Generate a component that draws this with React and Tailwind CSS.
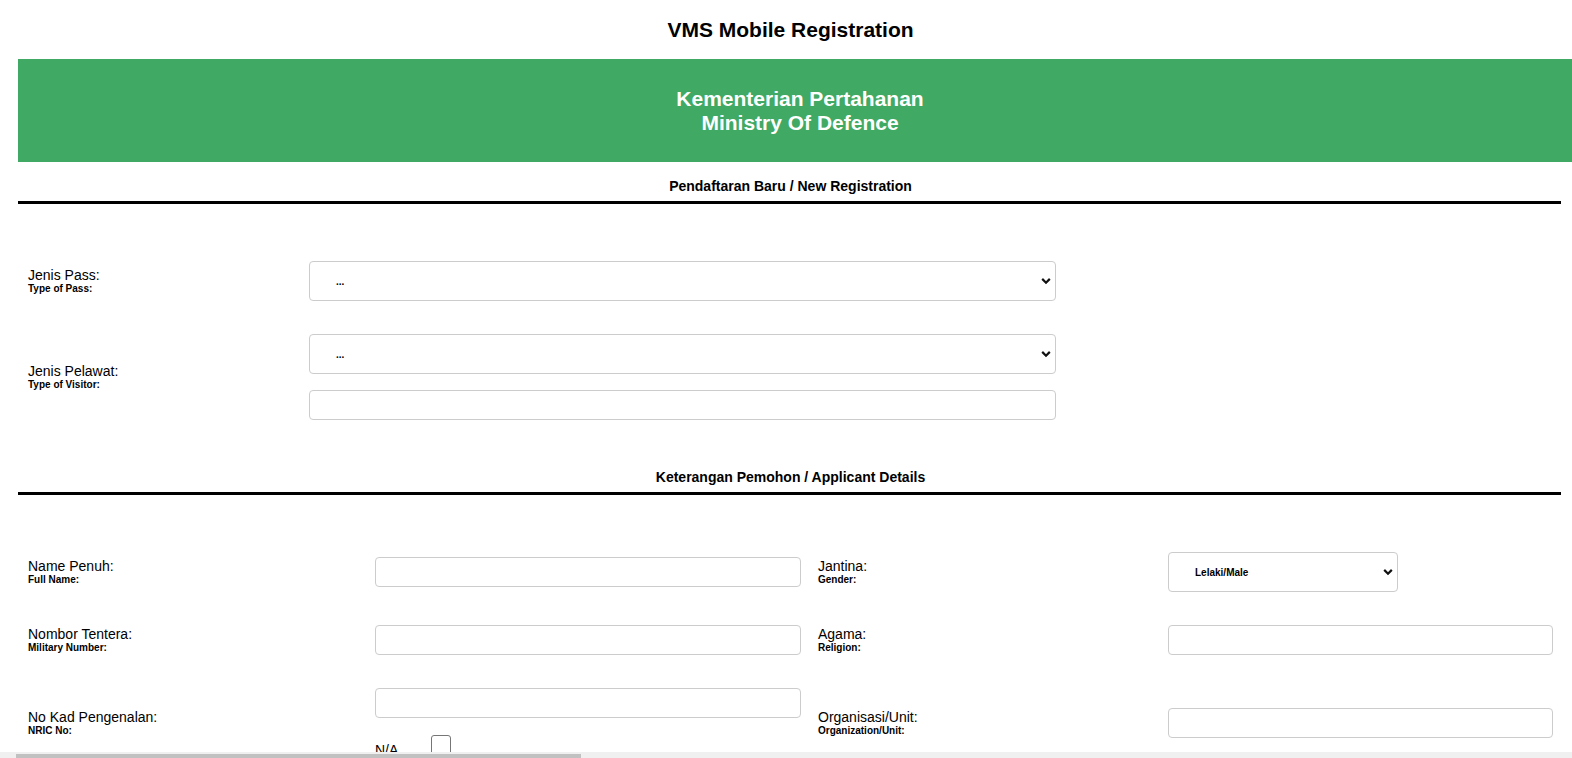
import { useState } from 'react';

function FieldLabel({ main, sub }) {
  return (
    <div>
      <div className="text-[14px] leading-[16px]">{main}</div>
      <div className="text-[10px] leading-[12px] font-bold">{sub}</div>
    </div>
  );
}

function SelectBox({ value, options, onChange, className }) {
  return (
    <div className={`relative h-[40px] ${className}`}>
      <select
        value={value}
        onChange={(e) => onChange(e.target.value)}
        className="w-full h-full appearance-none bg-white border border-[#cccccc] rounded-[4px] pl-[26px] pr-[20px] text-[10px] font-bold text-black outline-none"
      >
        {options.map((o) => (
          <option key={o} value={o}>
            {o}
          </option>
        ))}
      </select>
      <svg
        className="absolute right-[5px] top-1/2 -translate-y-1/2 pointer-events-none"
        width="10"
        height="7"
        viewBox="0 0 10 7"
      >
        <path d="M1.2 1.4 L5 5.2 L8.8 1.4" stroke="#111" strokeWidth="2.2" fill="none" />
      </svg>
    </div>
  );
}

function TextBox({ className }) {
  return (
    <input
      type="text"
      className={`h-[30px] bg-white border border-[#cccccc] rounded-[4px] px-2 text-[14px] outline-none ${className}`}
    />
  );
}

function SectionHeading({ children, className }) {
  return (
    <div className={className}>
      <div className="text-center text-[14px] leading-[16px] font-bold">{children}</div>
      <div className="mt-[7px] h-[3px] w-[1543px] bg-black" />
    </div>
  );
}

export default function App() {
  const [form, setForm] = useState({ pass: '...', visitor: '...', gender: 'Lelaki/Male', na: false });
  const update = (key, value) => setForm((f) => ({ ...f, [key]: value }));

  return (
    <div className="h-[758px] flex flex-col overflow-hidden bg-white text-black font-['Liberation_Sans',Arial,sans-serif]">
      <div className="flex-1 min-h-0 overflow-hidden">
        <div className="ml-[18px]">
          <h1 className="mt-[18px] w-[1545px] text-center text-[21px] leading-[24px] font-bold">
            VMS Mobile Registration
          </h1>

          <div className="mt-[17px] w-[1564px] h-[103px] bg-[#40a963] flex flex-col items-center justify-center text-white text-[21px] leading-[24px] font-bold">
            <div>Kementerian Pertahanan</div>
            <div>Ministry Of Defence</div>
          </div>

          <div className="w-[1545px]">
            <SectionHeading className="mt-[16px]">Pendaftaran Baru / New Registration</SectionHeading>

            <div className="mt-[57px] pl-[10px] flex flex-col gap-[33px]">
              <div className="flex items-center">
                <div className="w-[281px]">
                  <FieldLabel main="Jenis Pass:" sub="Type of Pass:" />
                </div>
                <SelectBox
                  className="w-[747px]"
                  value={form.pass}
                  options={['...']}
                  onChange={(v) => update('pass', v)}
                />
              </div>
              <div className="flex items-center">
                <div className="w-[281px]">
                  <FieldLabel main="Jenis Pelawat:" sub="Type of Visitor:" />
                </div>
                <div className="flex flex-col gap-[16px]">
                  <SelectBox
                    className="w-[747px]"
                    value={form.visitor}
                    options={['...']}
                    onChange={(v) => update('visitor', v)}
                  />
                  <TextBox className="w-[747px]" />
                </div>
              </div>
            </div>

            <SectionHeading className="mt-[49px]">Keterangan Pemohon / Applicant Details</SectionHeading>

            <div className="mt-[57px] pl-[10px] grid grid-cols-[347px_443px_350px_385px] items-center gap-y-[33px]">
              <FieldLabel main="Name Penuh:" sub="Full Name:" />
              <TextBox className="w-[426px]" />
              <FieldLabel main="Jantina:" sub="Gender:" />
              <SelectBox
                className="w-[230px]"
                value={form.gender}
                options={['Lelaki/Male', 'Perempuan/Female']}
                onChange={(v) => update('gender', v)}
              />

              <FieldLabel main="Nombor Tentera:" sub="Military Number:" />
              <TextBox className="w-[426px]" />
              <FieldLabel main="Agama:" sub="Religion:" />
              <TextBox className="w-[385px]" />

              <FieldLabel main="No Kad Pengenalan:" sub="NRIC No:" />
              <div className="flex flex-col">
                <TextBox className="w-[426px]" />
                <div className="mt-[17px] flex items-baseline">
                  <span className="text-[14px] leading-[16px]">N/A</span>
                  <input
                    type="checkbox"
                    checked={form.na}
                    onChange={(e) => update('na', e.target.checked)}
                    className="ml-[33px] w-[20px] h-[20px] appearance-none bg-white border border-[#767676] rounded-[3px]"
                  />
                </div>
              </div>
              <FieldLabel main="Organisasi/Unit:" sub="Organization/Unit:" />
              <TextBox className="w-[385px]" />
            </div>
          </div>
        </div>
      </div>

      {/* horizontal scrollbar, cut off at the bottom */}
      <div className="h-[6px] shrink-0 bg-[#f0f0f0] pt-[2px] pl-[16px]">
        <div className="w-[565px] h-[4px] bg-[#c1c1c1]" />
      </div>
    </div>
  );
}
